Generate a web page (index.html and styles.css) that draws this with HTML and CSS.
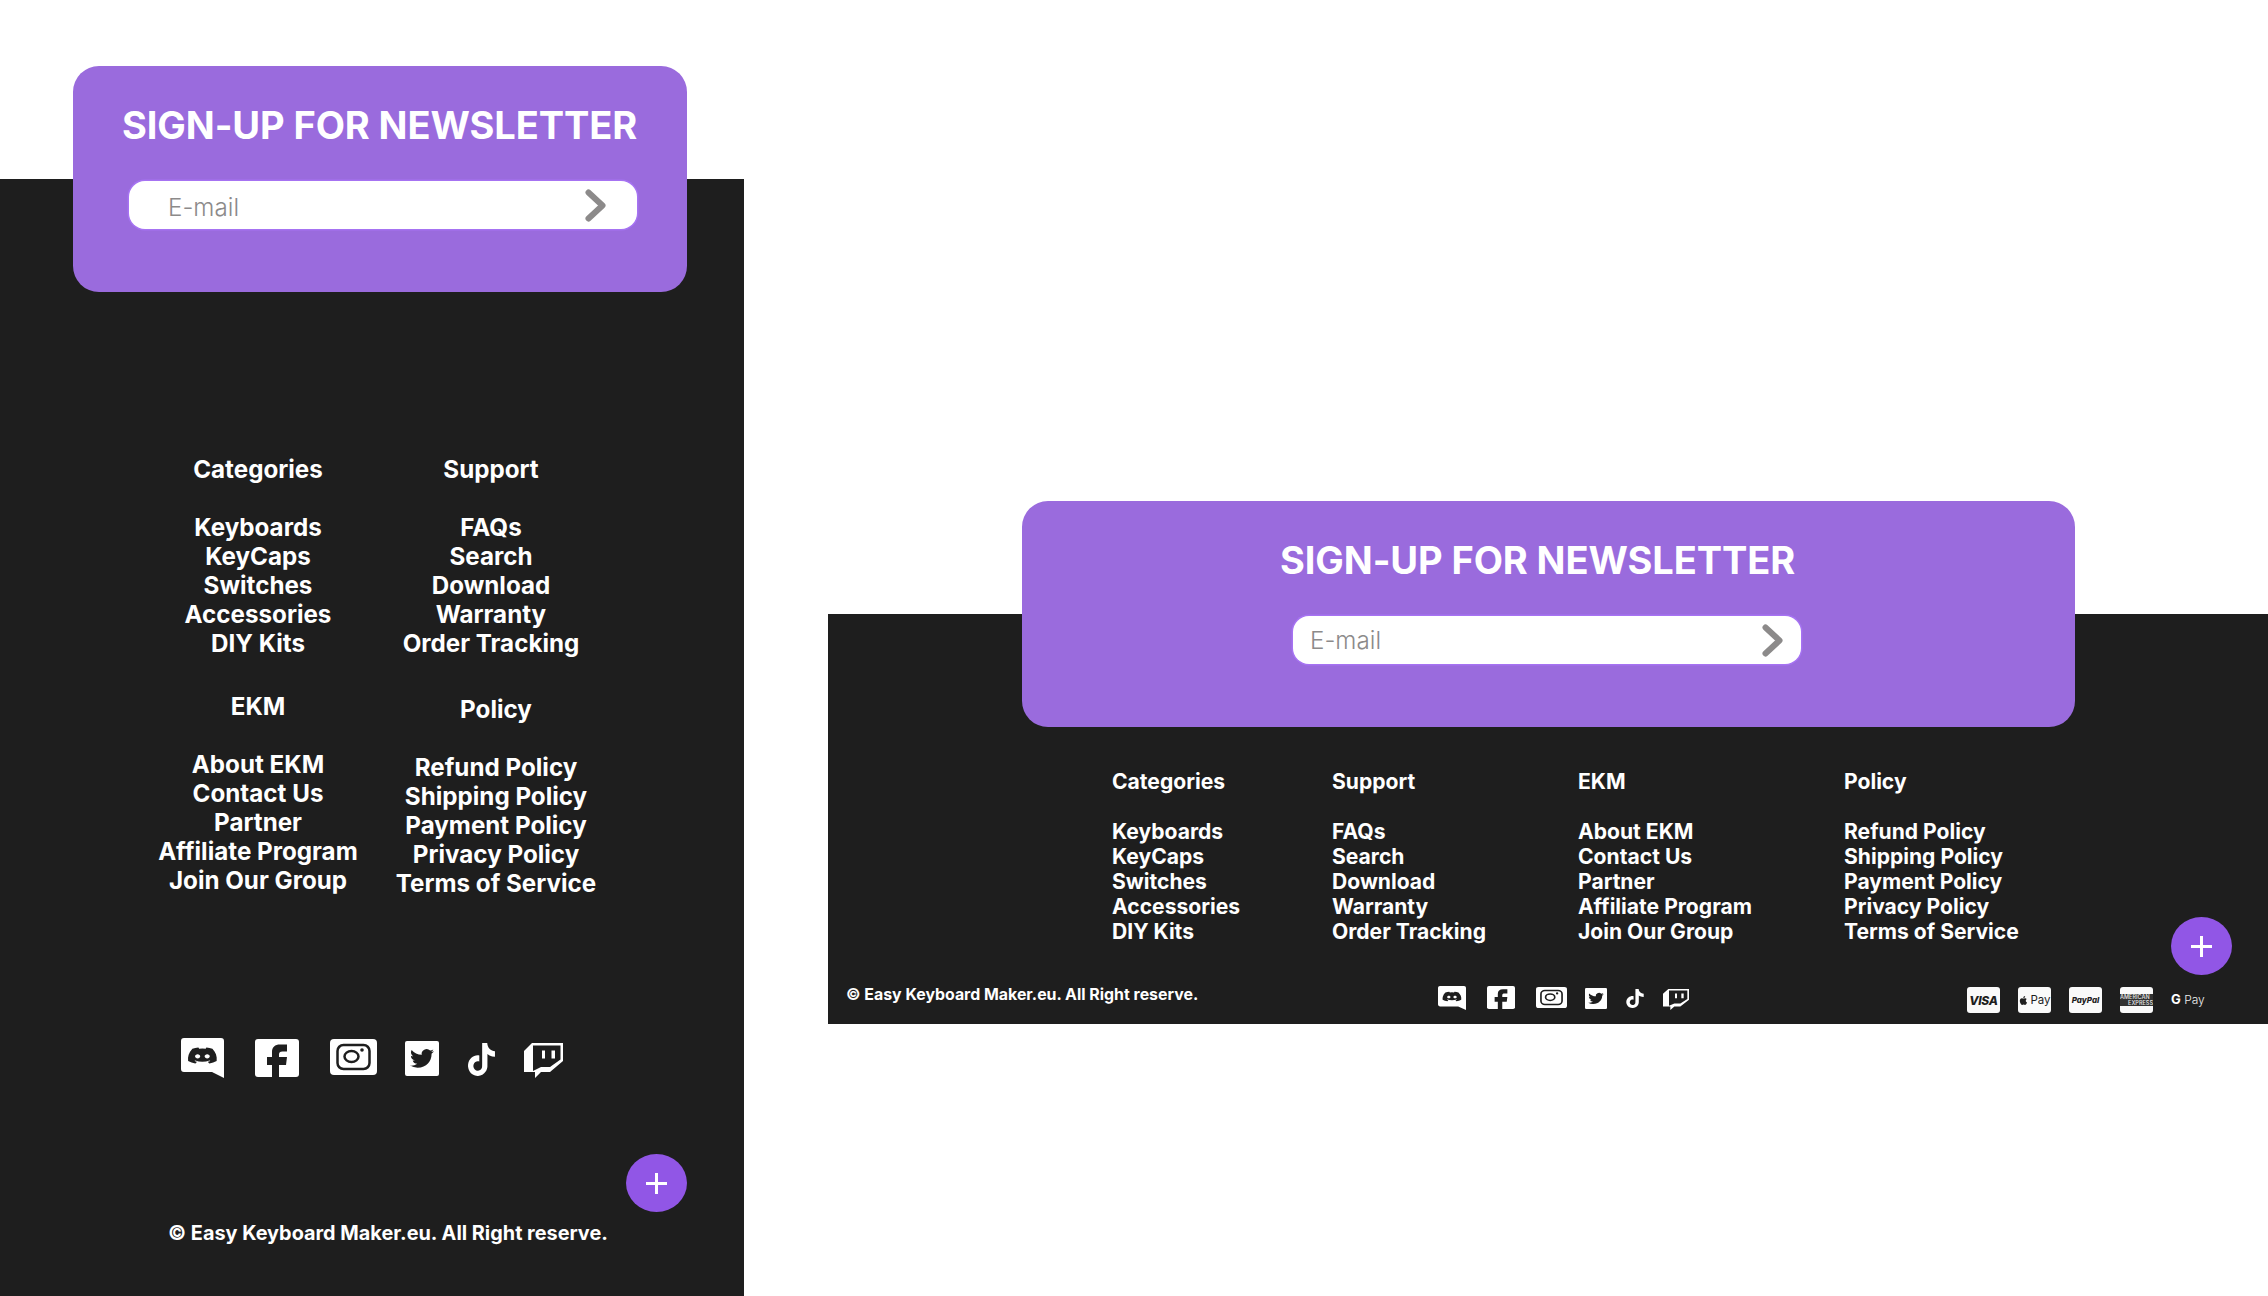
FILE: index.html
```html
<!DOCTYPE html>
<html lang="en">
<head>
<meta charset="utf-8">
<title>Easy Keyboard Maker footer</title>
<link rel="stylesheet" href="styles.css">
</head>
<body>
<svg class="defs" width="0" height="0" aria-hidden="true">
  <symbol id="i-chevron" viewBox="0 0 21 33" preserveAspectRatio="none">
    <path d="M3.500 3.500L17.500 16.500L3.500 29.500" fill="none" stroke="#8c8a8a" stroke-width="6" stroke-linejoin="round" stroke-linecap="round"/>
  </symbol>
  <symbol id="i-plus" viewBox="0 0 21 21">
    <path d="M0 10.500H21M10.500 0V21" stroke="#fff" stroke-width="3" fill="none"/>
  </symbol>
  <symbol id="i-discord" viewBox="0 0 43 40" preserveAspectRatio="none">
    <path d="M3 0H40Q43 0 43 3V40L31 34H3Q0 34 0 31V3Q0 0 3 0Z" fill="#fff"/>
    <path transform="translate(7 7) scale(1.2 .88)" fill="#1e1e1e" fill-rule="evenodd" d="M20.317 4.37a19.791 19.791 0 0 0-4.885-1.515.074.074 0 0 0-.079.037c-.21.375-.444.864-.608 1.25a18.27 18.27 0 0 0-5.487 0 12.64 12.64 0 0 0-.617-1.25.077.077 0 0 0-.079-.037A19.736 19.736 0 0 0 3.677 4.37a.07.07 0 0 0-.032.027C.533 9.046-.32 13.58.099 18.057a.082.082 0 0 0 .031.057 19.9 19.9 0 0 0 5.993 3.03.078.078 0 0 0 .084-.028 14.09 14.09 0 0 0 1.226-1.994.076.076 0 0 0-.041-.106 13.107 13.107 0 0 1-1.872-.892.077.077 0 0 1-.008-.128 10.2 10.2 0 0 0 .372-.292.074.074 0 0 1 .077-.01c3.928 1.793 8.18 1.793 12.062 0a.074.074 0 0 1 .078.01c.12.098.246.198.373.292a.077.077 0 0 1-.006.127 12.299 12.299 0 0 1-1.873.892.077.077 0 0 0-.041.107c.36.698.772 1.362 1.225 1.993a.076.076 0 0 0 .084.028 19.839 19.839 0 0 0 6.002-3.03.077.077 0 0 0 .032-.054c.5-5.177-.838-9.674-3.549-13.66a.061.061 0 0 0-.031-.03zM8.02 15.33c-1.183 0-2.157-1.085-2.157-2.419 0-1.333.956-2.419 2.157-2.419 1.21 0 2.176 1.096 2.157 2.42 0 1.333-.956 2.418-2.157 2.418zm7.975 0c-1.183 0-2.157-1.085-2.157-2.419 0-1.333.955-2.419 2.157-2.419 1.21 0 2.176 1.096 2.157 2.42 0 1.333-.946 2.418-2.157 2.418z"/>
  </symbol>
  <symbol id="i-facebook" viewBox="0 0 44 38" preserveAspectRatio="none">
    <path d="M3 0H41Q44 0 44 3V35Q44 38 41 38H3Q0 38 0 35V3Q0 0 3 0Z" fill="#fff"/>
    <path d="M17 38V26H12V18H17V13C17 8 20 5.500 25 5.500H32V12.500H27.500C25 12.500 24 13.500 24 15.500V18H32L31 26H24V38Z" fill="#1e1e1e"/>
  </symbol>
  <symbol id="i-instagram" viewBox="0 0 47 36" preserveAspectRatio="none">
    <rect width="47" height="36" rx="4" fill="#fff"/>
    <rect x="7.500" y="6" width="32" height="24" rx="6" fill="none" stroke="#1e1e1e" stroke-width="2.500"/>
    <ellipse cx="21.500" cy="17.500" rx="7" ry="5.500" fill="none" stroke="#1e1e1e" stroke-width="2.500"/>
    <circle cx="32" cy="11" r="1.800" fill="#1e1e1e"/>
  </symbol>
  <symbol id="i-twitter" viewBox="0 0 34 35" preserveAspectRatio="none">
    <rect width="34" height="35" rx="2" fill="#fff"/>
    <path transform="translate(5 6) scale(1 .95)" fill="#1e1e1e" d="M23.953 4.57a10 10 0 01-2.825.775 4.958 4.958 0 002.163-2.723c-.951.555-2.005.959-3.127 1.184a4.92 4.92 0 00-8.384 4.482C7.690 8.095 4.067 6.130 1.640 3.162a4.822 4.822 0 00-.666 2.475c0 1.710.870 3.213 2.188 4.096a4.904 4.904 0 01-2.228-.616v.060a4.923 4.923 0 003.946 4.827 4.996 4.996 0 01-2.212.085 4.936 4.936 0 004.604 3.417 9.867 9.867 0 01-6.102 2.105c-.390 0-.779-.023-1.170-.067a13.995 13.995 0 007.557 2.209c9.053 0 13.998-7.496 13.998-13.985 0-.210 0-.420-.015-.630A9.935 9.935 0 0024 4.590z"/>
  </symbol>
  <symbol id="i-tiktok" viewBox="0 0 24 24" preserveAspectRatio="none">
    <path fill="#fff" d="M12.525.02c1.310-.020 2.610-.010 3.910-.020.080 1.530.630 3.090 1.750 4.170 1.120 1.110 2.700 1.620 4.240 1.790v4.030c-1.440-.050-2.890-.350-4.200-.970-.570-.260-1.100-.590-1.620-.930-.010 2.920.010 5.840-.020 8.750-.080 1.400-.540 2.790-1.350 3.940-1.310 1.920-3.580 3.170-5.910 3.210-1.430.080-2.860-.310-4.080-1.030-2.020-1.190-3.440-3.370-3.650-5.710-.020-.500-.030-1-.010-1.490.180-1.900 1.120-3.720 2.580-4.960 1.660-1.440 3.980-2.130 6.150-1.720.020 1.480-.040 2.960-.040 4.440-.990-.320-2.150-.230-3.020.370-.630.410-1.110 1.040-1.360 1.750-.210.510-.150 1.070-.140 1.610.240 1.640 1.820 3.020 3.500 2.870 1.120-.010 2.190-.660 2.770-1.610.190-.330.400-.670.410-1.060.100-1.790.060-3.570.070-5.360.010-4.030-.010-8.050.020-12.070z"/>
  </symbol>
  <symbol id="i-twitch" viewBox="0 0 39 35" preserveAspectRatio="none">
    <path fill="#fff" d="M8 0H39V18L26 29H17L11 35V29H0V8Z"/>
    <path fill="#1e1e1e" d="M9 2.500H36.500V16.500L26 24H17L9 28Z"/>
    <path fill="#fff" d="M18 7.500H21V15.500H18ZM27.500 7.500H31V15.500H27.500Z"/>
  </symbol>
  <symbol id="i-apple" viewBox="0 0 24 24">
    <path fill="#1e1e1e" d="M17.050 12.500c0-2.400 2-3.500 2.100-3.600-1.100-1.700-2.900-1.900-3.500-1.900-1.500-.2-2.900.9-3.700.9-.8 0-1.900-.9-3.200-.9-1.600 0-3.100 1-4 2.400-1.700 3-.4 7.400 1.200 9.800.8 1.200 1.800 2.500 3.100 2.400 1.200 0 1.700-.8 3.200-.8s1.900.8 3.200.8 2.200-1.200 3-2.400c.9-1.400 1.300-2.700 1.300-2.800-.1 0-2.900-1.100-2.900-4.400zM14.600 5.200c.7-.8 1.100-2 1-3.200-1 0-2.200.7-2.900 1.500-.6.700-1.200 1.900-1 3.100 1.100.1 2.200-.6 2.900-1.400z"/>
  </symbol>
</svg>

<main class="stage">
  <section class="panel panel-mobile">
    <div class="signup signup-mobile">
      <h2 class="signup-title">SIGN-UP FOR NEWSLETTER</h2>
      <div class="email">
        <span class="email-label">E-mail</span>
        <svg class="chevron"><use href="#i-chevron"/></svg>
      </div>
    </div>
    <div class="m-cols">
      <div class="m-col">
        <nav class="m-block">
          <h3 class="m-head">Categories</h3>
          <a class="m-link">Keyboards</a><a class="m-link">KeyCaps</a><a class="m-link">Switches</a><a class="m-link">Accessories</a><a class="m-link">DIY Kits</a>
        </nav>
        <nav class="m-block">
          <h3 class="m-head">EKM</h3>
          <a class="m-link">About EKM</a><a class="m-link">Contact Us</a><a class="m-link">Partner</a><a class="m-link">Affiliate Program</a><a class="m-link">Join Our Group</a>
        </nav>
      </div>
      <div class="m-col">
        <nav class="m-block m-support">
          <h3 class="m-head">Support</h3>
          <a class="m-link">FAQs</a><a class="m-link">Search</a><a class="m-link">Download</a><a class="m-link">Warranty</a><a class="m-link">Order Tracking</a>
        </nav>
        <nav class="m-block m-policy">
          <h3 class="m-head">Policy</h3>
          <a class="m-link">Refund Policy</a><a class="m-link">Shipping Policy</a><a class="m-link">Payment Policy</a><a class="m-link">Privacy Policy</a><a class="m-link">Terms of Service</a>
        </nav>
      </div>
    </div>
    <div class="social social-lg">
      <svg class="s-discord"><use href="#i-discord"/></svg>
      <svg class="s-facebook"><use href="#i-facebook"/></svg>
      <svg class="s-instagram"><use href="#i-instagram"/></svg>
      <svg class="s-twitter"><use href="#i-twitter"/></svg>
      <svg class="s-tiktok"><use href="#i-tiktok"/></svg>
      <svg class="s-twitch"><use href="#i-twitch"/></svg>
    </div>
    <div class="fab fab-mobile"><svg class="fab-icon"><use href="#i-plus"/></svg></div>
    <p class="copy copy-mobile">© Easy Keyboard Maker.eu. All Right reserve.</p>
  </section>

  <section class="panel panel-desktop">
    <div class="signup signup-desktop">
      <h2 class="signup-title">SIGN-UP FOR NEWSLETTER</h2>
      <div class="email">
        <span class="email-label">E-mail</span>
        <svg class="chevron"><use href="#i-chevron"/></svg>
      </div>
    </div>
    <div class="d-cols">
      <nav class="d-col d-col-a">
        <h3 class="d-head">Categories</h3>
        <a class="d-link">Keyboards</a><a class="d-link">KeyCaps</a><a class="d-link">Switches</a><a class="d-link">Accessories</a><a class="d-link">DIY Kits</a>
      </nav>
      <nav class="d-col d-col-b">
        <h3 class="d-head">Support</h3>
        <a class="d-link">FAQs</a><a class="d-link">Search</a><a class="d-link">Download</a><a class="d-link">Warranty</a><a class="d-link">Order Tracking</a>
      </nav>
      <nav class="d-col d-col-c">
        <h3 class="d-head">EKM</h3>
        <a class="d-link">About EKM</a><a class="d-link">Contact Us</a><a class="d-link">Partner</a><a class="d-link">Affiliate Program</a><a class="d-link">Join Our Group</a>
      </nav>
      <nav class="d-col">
        <h3 class="d-head">Policy</h3>
        <a class="d-link">Refund Policy</a><a class="d-link">Shipping Policy</a><a class="d-link">Payment Policy</a><a class="d-link">Privacy Policy</a><a class="d-link">Terms of Service</a>
      </nav>
    </div>
    <div class="fab fab-desktop"><svg class="fab-icon"><use href="#i-plus"/></svg></div>
    <div class="d-bottom">
      <p class="copy copy-desktop">© Easy Keyboard Maker.eu. All Right reserve.</p>
      <div class="social social-sm">
        <svg class="s-discord"><use href="#i-discord"/></svg>
        <svg class="s-facebook"><use href="#i-facebook"/></svg>
        <svg class="s-instagram"><use href="#i-instagram"/></svg>
        <svg class="s-twitter"><use href="#i-twitter"/></svg>
        <svg class="s-tiktok"><use href="#i-tiktok"/></svg>
        <svg class="s-twitch"><use href="#i-twitch"/></svg>
      </div>
      <div class="pay">
        <span class="pay-card pay-visa">VISA</span>
        <span class="pay-card pay-apple"><svg class="apple"><use href="#i-apple"/></svg>Pay</span>
        <span class="pay-card pay-paypal">PayPal</span>
        <span class="pay-card pay-amex"><span class="amex-line">AMERICAN</span><span class="amex-line amex-right">EXPRESS</span></span>
        <span class="pay-g"><b class="g-mark">G</b> Pay</span>
      </div>
    </div>
  </section>
</main>
</body>
</html>
```

FILE: styles.css
```css
* { box-sizing: border-box; }
html, body { margin: 0; padding: 0; background: #fff; }
body { font-family: Inter, "Liberation Sans", sans-serif; color: #fff; width: 2268px; height: 1296px; overflow: hidden; }
h2, h3, p { margin: 0; }
.defs { position: absolute; }

.stage { display: flex; align-items: flex-start; gap: 84px; }
.panel { background: #1e1e1e; position: relative; }
.panel-mobile { width: 744px; height: 1117px; margin-top: 179px; display: flex; flex-direction: column; }
.panel-desktop { width: 1440px; height: 410px; margin-top: 614px; }

.signup { background: #9a6bdd; border-radius: 26px; padding-top: 35px; display: flex; flex-direction: column; align-items: flex-start; }
.signup-mobile { width: 614px; height: 226px; margin: -113px 0 0 73px; padding-left: 49px; }
.signup-desktop { width: 1053px; height: 226px; margin: -113px 0 0 194px; padding-left: 258px; }
.signup-title { font-size: 38px; line-height: 48px; font-weight: 650; white-space: nowrap; color: #fff; letter-spacing: -.1px; }

.email { width: 509px; height: 48px; margin-top: 32px; background: #fff; border-radius: 16px; box-shadow: 0 0 0 1.500px #a673f2; display: flex; align-items: center; justify-content: space-between; color: #8c8a8a; }
.signup-mobile .email { margin-left: 7px; width: 508px; padding: 0 31px 0 39px; }
.signup-desktop .email { margin-left: 13px; width: 508px; padding: 0 18px 0 17px; }
.email-label { font-size: 24.200px; font-weight: 300; line-height: 48px; padding-top: 5px; }
.signup-desktop .email-label { padding-top: 1px; }
.chevron { width: 21px; height: 33px; }

.m-cols { display: flex; gap: 2px; margin: 163px 0 0 143px; }
.m-col { width: 230px; display: flex; flex-direction: column; gap: 34px; }
.m-block { display: flex; flex-direction: column; align-items: center; font-size: 24.200px; line-height: 29px; font-weight: 650; }
.m-head { font-size: 24.200px; line-height: 29px; font-weight: 650; margin-bottom: 29px; }
.m-link { white-space: nowrap; }
.m-support { padding-left: 2px; }
.m-policy { padding-left: 12px; margin-top: 3px; }

.social { display: flex; align-items: flex-start; }
.social-lg { margin: 140px 0 0 181px; gap: 28px; }
.social-lg .s-discord { width: 43px; height: 40px; margin-right: 3px; }
.social-lg .s-facebook { width: 44px; height: 38px; margin: 1px 3px 0 0; }
.social-lg .s-instagram { width: 47px; height: 36px; margin-top: 1px; }
.social-lg .s-twitter { width: 34px; height: 35px; margin-top: 3px; }
.social-lg .s-tiktok { width: 31px; height: 33px; margin: 5px 0 0 -1px; }
.social-lg .s-twitch { width: 39px; height: 35px; margin: 5px 0 0 -1px; }

.social-sm { gap: 18px; margin: 1px 0 0 1px; }
.social-sm .s-discord { width: 28px; height: 24px; margin-right: 3px; }
.social-sm .s-facebook { width: 28px; height: 23px; margin-right: 3px; }
.social-sm .s-instagram { width: 31px; height: 21px; margin-top: 1px; }
.social-sm .s-twitter { width: 22px; height: 21px; margin-top: 2px; }
.social-sm .s-tiktok { width: 20px; height: 19px; margin-top: 3px; }
.social-sm .s-twitch { width: 26px; height: 21px; margin-top: 3px; }

.fab { position: absolute; width: 61px; height: 58px; border-radius: 50%; background: #9156e6; display: flex; align-items: center; justify-content: center; }
.fab-mobile { left: 626px; top: 975px; }
.fab-desktop { left: 1343px; top: 303px; }
.fab-icon { width: 21px; height: 21px; }

.copy { font-weight: 650; white-space: nowrap; }
.copy-mobile { font-size: 19.850px; line-height: 28px; position: absolute; left: 168px; top: 1040px; }
.copy-desktop { font-size: 15.900px; line-height: 20px; width: 591px; flex: none; margin-top: 0; }

.d-cols { display: flex; margin: 42px 0 0 284px; }
.d-col { display: flex; flex-direction: column; align-items: flex-start; font-size: 21.100px; line-height: 25px; font-weight: 650; }
.d-col-a { width: 220px; }
.d-col-b { width: 246px; }
.d-col-c { width: 266px; }
.d-head { font-size: 21.100px; line-height: 25px; font-weight: 650; margin-bottom: 25px; }
.d-link { white-space: nowrap; }

.d-bottom { display: flex; align-items: flex-start; margin-top: 41px; padding: 0 64px 0 18px; }
.pay { display: flex; align-items: center; gap: 18px; margin-left: auto; margin-top: 2px; }
.pay-card { width: 33px; height: 26px; background: #fafafa; border-radius: 3px; color: #1e1e1e; display: flex; align-items: center; justify-content: center; overflow: hidden; white-space: nowrap; }
.pay-visa { font-size: 12px; font-style: italic; font-weight: 800; letter-spacing: -.3px; }
.pay-apple { font-size: 11.500px; font-weight: 400; gap: 1px; }
.apple { width: 11px; height: 11px; }
.pay-paypal { font-size: 8px; font-style: italic; font-weight: 800; }
.pay-amex { flex-direction: column; align-items: stretch; font-size: 5.500px; line-height: 6px; font-weight: 600; }
.amex-line { background: #333; color: #ddd; white-space: nowrap; text-align: left; overflow: hidden; }
.amex-right { text-align: right; }
.pay-g { width: 33px; font-size: 12px; font-weight: 300; color: #eee; white-space: nowrap; margin-top: -2px; }
.g-mark { font-weight: 700; color: #fff; font-size: 13px; }
```
